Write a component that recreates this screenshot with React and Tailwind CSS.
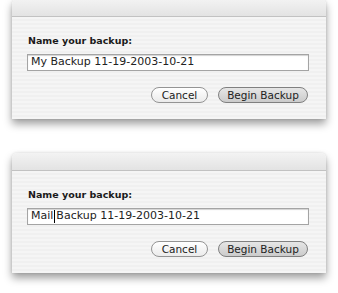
import React from "react";

function Dialog({ name, caret, className }) {
  return (
    <div
      className={
        "mx-[12px] w-[314px] rounded-t-[5px] shadow-[0_5px_9px_rgba(0,0,0,0.38),0_0_3px_rgba(0,0,0,0.12)] " +
        className
      }
    >
      <div className="h-[18px] rounded-t-[5px] bg-gradient-to-b from-[#f3f3f3] to-[#e3e3e3] border-b border-[#c2c2c2]" />
      <div className="h-[102px] bg-[repeating-linear-gradient(to_bottom,#f5f5f5_0px,#f5f5f5_2px,#f0f0f0_2px,#f0f0f0_4px)] px-[15px] pt-[18px] font-['DejaVu_Sans',sans-serif]">
        <div className="pl-[1px] text-[9.5px] font-bold leading-[12px] text-[#1a1a1a]">
          Name your backup:
        </div>
        <div className="mt-[7px] mr-[2px] flex h-[17px] items-center border border-[#a4a4a4] bg-white pl-[3px] text-[11px] text-[#222] shadow-[inset_0_1px_1px_rgba(0,0,0,0.18)]">
          {caret ? (
            <>
              <span>Mail</span>
              <span className="mx-[1px] h-[13px] w-px bg-black" />
              <span>Backup 11-19-2003-10-21</span>
            </>
          ) : (
            <span>{name}</span>
          )}
        </div>
        <div className="mt-[16px] mr-[3px] flex justify-end gap-[10px] text-[10.5px] text-[#222]">
          <button className="h-[16px] w-[57px] rounded-full border border-[#949494] bg-gradient-to-b from-white to-[#ebebeb] leading-[14px]">
            Cancel
          </button>
          <button className="h-[16px] w-[90px] rounded-full border border-[#808080] bg-gradient-to-b from-[#e6e6e6] to-[#cbcbcb] leading-[14px]">
            Begin Backup
          </button>
        </div>
      </div>
    </div>
  );
}

export default function App() {
  return (
    <div className="h-[293px] w-[338px] overflow-hidden bg-white">
      <Dialog name="My Backup 11-19-2003-10-21" className="-mt-[1px]" />
      <Dialog caret className="mt-[34px]" />
    </div>
  );
}
